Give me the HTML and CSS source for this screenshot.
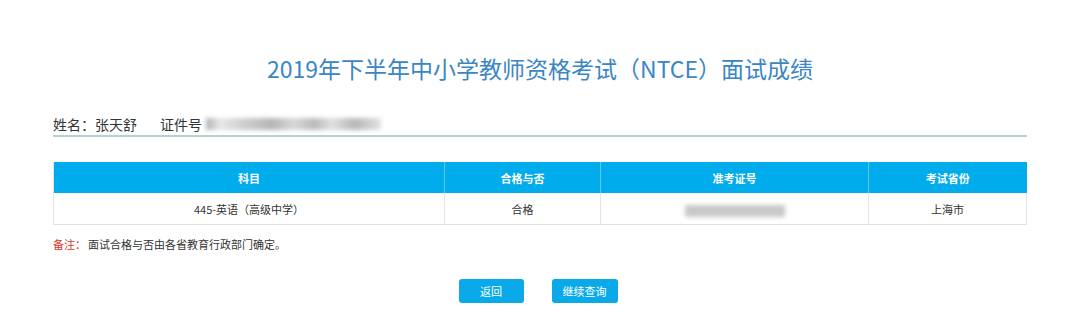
FILE: index.html
```html
<!DOCTYPE html>
<html lang="zh-CN">
<head>
  <meta charset="UTF-8" />
  <title>面试成绩</title>
  <link rel="stylesheet" href="styles.css">
</head>
<body>
  <div class="page">
    <h1 class="title">2019年下半年中小学教师资格考试（NTCE）面试成绩</h1>

    <div class="info">
      <span class="label">姓名：张天舒</span>
      <span class="label id">证件号</span>
      <span class="masked wide"></span>
    </div>

    <table class="result">
      <thead>
        <tr>
          <th class="c1">科目</th>
          <th class="c2">合格与否</th>
          <th class="c3">准考证号</th>
          <th class="c4">考试省份</th>
        </tr>
      </thead>
      <tbody>
        <tr>
          <td>445-英语（高级中学）</td>
          <td>合格</td>
          <td><span class="masked short"></span></td>
          <td>上海市</td>
        </tr>
      </tbody>
    </table>

    <p class="note"><span class="red">备注：</span>面试合格与否由各省教育行政部门确定。</p>

    <div class="actions">
      <button class="btn back">返回</button>
      <button class="btn more">继续查询</button>
    </div>
  </div>
</body>
</html>
```

FILE: styles.css
```css
body {
  margin: 0;
  background: #fff;
  font-family: "Noto Sans CJK SC", "Noto Sans", sans-serif;
  color: #333;
}

.page {
  width: 974px;
  margin: 0 auto;
  padding-top: 50px;
}

.title {
  margin: 0;
  text-align: center;
  font-size: 23px;
  font-weight: normal;
  color: #3a86c4;
  line-height: 36px;
}

.info {
  display: flex;
  align-items: center;
  margin-top: 27px;
  height: 22px;
  border-bottom: 2px solid #b3d3d3;
  font-size: 14px;
  color: #333;
}

.label.id {
  margin-left: 23px;
}

.masked {
  display: inline-block;
  background: #c9c9c9;
  filter: blur(2px);
}

.masked.wide {
  width: 175px;
  height: 12px;
  margin-left: 4px;
  background: linear-gradient(90deg, #b0b0b0 0%, #e8e8e8 8%, #cdcdcd 22%, #b5b5b5 38%, #d8d8d8 50%, #bababa 62%, #e0e0e0 72%, #b6b6b6 85%, #e2e2e2 100%);
}

.masked.short {
  width: 100px;
  height: 12px;
  vertical-align: middle;
}

.result {
  width: 100%;
  margin-top: 25px;
  border-collapse: collapse;
  font-size: 11px;
}

.result th {
  background: #00acec;
  color: #fff;
  font-weight: bold;
  height: 31px;
  padding: 0;
  border-left: 1px solid #5cc8f0;
}

.result th:first-child,
.result td:first-child {
  border-left: 1px solid #e3e3e3;
}

.result td {
  height: 31px;
  padding: 0;
  text-align: center;
  color: #333;
  border: 1px solid #e3e3e3;
  border-top: none;
}

.c1 { width: 390px; }
.c2 { width: 155px; }
.c3 { width: 267px; }

.note {
  margin: 11px 0 0;
  font-size: 11px;
  color: #333;
}

.note .red {
  color: #d9362b;
  margin-right: 2px;
}

.actions {
  display: flex;
  justify-content: center;
  gap: 28px;
  margin-top: 27px;
  padding-right: 4px;
}

.btn {
  width: 65px;
  height: 24px;
  border: none;
  border-radius: 3px;
  background: #0aaaea;
  color: #fff;
  font-family: inherit;
  font-size: 11px;
  cursor: pointer;
}

.btn.more {
  width: 66px;
}
```
